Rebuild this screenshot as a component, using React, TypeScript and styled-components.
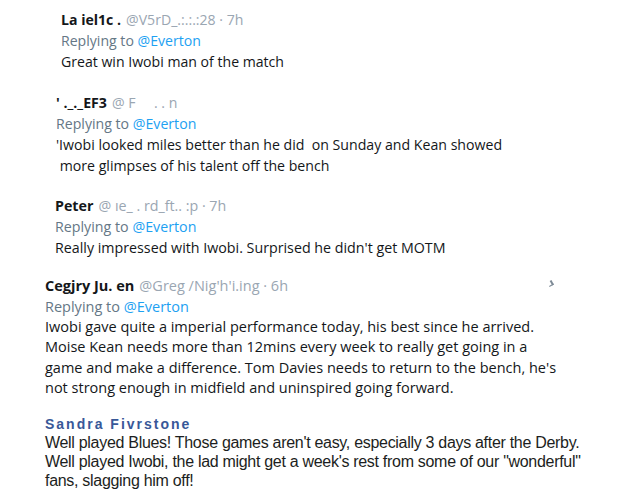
import styled, { createGlobalStyle } from "styled-components";

const GlobalStyle = createGlobalStyle`
  html, body {
    margin: 0;
    padding: 0;
    background: #ffffff;
  }
  body {
    font-family: "Open Sans", "Noto Sans", sans-serif;
    width: 626px;
    height: 493px;
    overflow: hidden;
  }
`;

type TweetData = {
  name: string;
  handle: string;
  body: string[];
  indent: number;
  gap: number;
  size: number;
  lineHeight?: number;
};

const tweets: TweetData[] = [
  {
    name: "La iel1c .",
    handle: "@V5rD_.:.:.:28 · 7h",
    body: ["Great win Iwobi man of the match"],
    indent: 61,
    gap: 9,
    size: 14.1,
  },
  {
    name: "' ._._EF3",
    handle: "@ F\u00a0\u00a0\u00a0\u00a0 . . n",
    body: [
      "'Iwobi looked miles better than he did\u00a0 on Sunday and Kean showed",
      "\u00a0more glimpses of his talent off the bench",
    ],
    indent: 56,
    gap: 20,
    size: 14.15,
  },
  {
    name: "Peter",
    handle: "@ ıe_ . rd_ft.. :p · 7h",
    body: ["Really impressed with Iwobi. Surprised he didn't get MOTM"],
    indent: 55,
    gap: 19,
    size: 14.25,
  },
  {
    name: "Cegjry Ju. en",
    handle: "@Greg /Nig'h'i.ing · 6h",
    body: [
      "Iwobi gave quite a imperial performance today, his best since he arrived.",
      "Moise Kean needs more than 12mins every week to really get going in a",
      "game and make a difference. Tom Davies needs to return to the bench, he's",
      "not strong enough in midfield and uninspired going forward.",
    ],
    indent: 45,
    gap: 17,
    size: 14.5,
    lineHeight: 20.4,
  },
];

export default function App() {
  return (
    <Page>
      <GlobalStyle />
      {tweets.map((t, i) => (
        <Tweet key={i} $indent={t.indent} $gap={t.gap} $size={t.size}>
          <Header>
            <Name>{t.name}</Name>
            <Handle>{t.handle}</Handle>
            {i === 3 && <Caret />}
          </Header>
          <Replying>
            Replying to <Mention>@Everton</Mention>
          </Replying>
          {t.body.map((line, j) => (
            <Body key={j} $lh={t.lineHeight ?? 21}>
              {line}
            </Body>
          ))}
        </Tweet>
      ))}
      <Comment>
        <CommentName>Sandra Fivrstone</CommentName>
        <CommentBody>
          Well played Blues! Those games aren't easy, especially 3 days after the Derby.
        </CommentBody>
        <CommentBody>
          Well played Iwobi, the lad might get a week's rest from some of our "wonderful"
        </CommentBody>
        <CommentBody>fans, slagging him off!</CommentBody>
      </Comment>
    </Page>
  );
}

const Page = styled.div`
  display: flex;
  flex-direction: column;
  width: 626px;
  height: 493px;
  background: #ffffff;
`;

const Tweet = styled.div<{ $indent: number; $gap: number; $size: number }>`
  display: flex;
  flex-direction: column;
  padding-left: ${(p) => p.$indent}px;
  margin-top: ${(p) => p.$gap}px;
  font-size: ${(p) => p.$size}px;
  color: #14171a;
`;

const Header = styled.div`
  position: relative;
  display: flex;
  align-items: baseline;
  gap: 5px;
  line-height: 21px;
  width: 508px;
`;

const Name = styled.span`
  font-weight: 700;
  color: #14171a;
  white-space: pre;
`;

const Handle = styled.span`
  color: #9aa6b2;
  white-space: pre;
`;

const Caret = styled.span`
  position: absolute;
  right: 0;
  top: 6px;
  width: 3px;
  height: 4px;
  border-right: 2px solid #7d8a96;
  border-bottom: 1px solid #7d8a96;
  transform: rotate(-30deg);
`;

const Replying = styled.div`
  color: #657786;
  line-height: 21px;
`;

const Mention = styled.span`
  color: #1da1f2;
`;

const Body = styled.div<{ $lh: number }>`
  line-height: ${(p) => p.$lh}px;
  white-space: pre;
  color: #14171a;
`;

const Comment = styled.div`
  display: flex;
  flex-direction: column;
  padding-left: 45px;
  margin-top: 16px;
  font-family: "Liberation Sans", Arial, sans-serif;
`;

const CommentName = styled.div`
  font-size: 14px;
  font-weight: 700;
  color: #385898;
  line-height: 18px;
  letter-spacing: 2px;
`;

const CommentBody = styled.div`
  font-size: 16px;
  line-height: 19px;
  color: #1c1e21;
  white-space: pre;
  letter-spacing: -0.3px;
`;
